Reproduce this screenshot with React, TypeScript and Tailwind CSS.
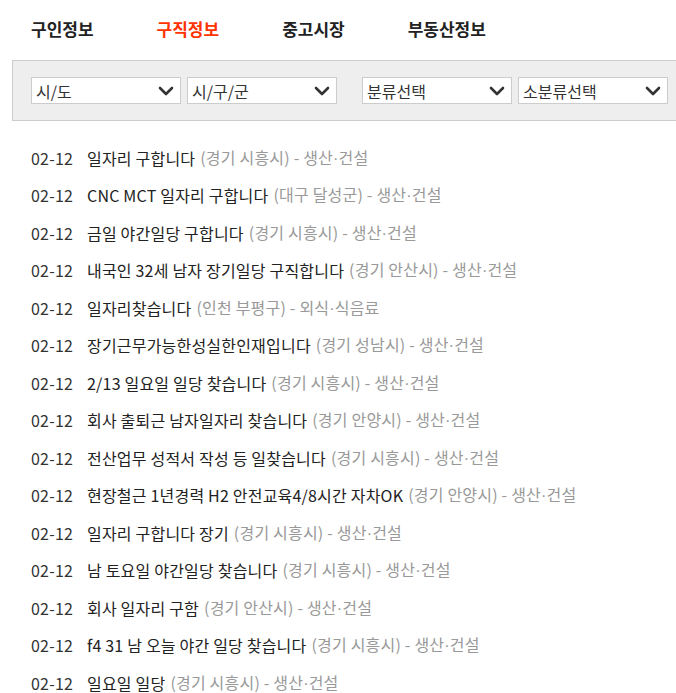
const tabs = [
  { label: '구인정보', active: false },
  { label: '구직정보', active: true },
  { label: '중고시장', active: false },
  { label: '부동산정보', active: false },
];

const posts = [
  { title: '일자리 구합니다', area: '경기 시흥시', cat: '생산·건설' },
  { title: 'CNC MCT 일자리 구합니다', area: '대구 달성군', cat: '생산·건설' },
  { title: '금일 야간일당 구합니다', area: '경기 시흥시', cat: '생산·건설' },
  { title: '내국인 32세 남자 장기일당 구직합니다', area: '경기 안산시', cat: '생산·건설' },
  { title: '일자리찾습니다', area: '인천 부평구', cat: '외식·식음료' },
  { title: '장기근무가능한성실한인재입니다', area: '경기 성남시', cat: '생산·건설' },
  { title: '2/13 일요일 일당 찾습니다', area: '경기 시흥시', cat: '생산·건설' },
  { title: '회사 출퇴근 남자일자리 찾습니다', area: '경기 안양시', cat: '생산·건설' },
  { title: '전산업무 성적서 작성 등 일찾습니다', area: '경기 시흥시', cat: '생산·건설' },
  { title: '현장철근 1년경력 H2 안전교육4/8시간 자차OK', area: '경기 안양시', cat: '생산·건설' },
  { title: '일자리 구합니다 장기', area: '경기 시흥시', cat: '생산·건설' },
  { title: '남 토요일 야간일당 찾습니다', area: '경기 시흥시', cat: '생산·건설' },
  { title: '회사 일자리 구함', area: '경기 안산시', cat: '생산·건설' },
  { title: 'f4 31 남 오늘 야간 일당 찾습니다', area: '경기 시흥시', cat: '생산·건설' },
  { title: '일요일 일당', area: '경기 시흥시', cat: '생산·건설' },
];

function Chevron() {
  return (
    <svg width="16" height="10" viewBox="0 0 16 10" className="shrink-0">
      <path d="M2 2 L8 8 L14 2" fill="none" stroke="#333" strokeWidth="2.6" strokeLinecap="round" strokeLinejoin="round" />
    </svg>
  );
}

function SelectBox({ label }: { label: string }) {
  return (
    <div className="w-[150px] h-[27px] bg-white border border-[#cccccc] flex items-center justify-between pl-[4px] pr-[6px] text-[16px] leading-none text-[#333]">
      <span>{label}</span>
      <Chevron />
    </div>
  );
}

// category with a narrow middle dot, like the original bitmap font
function Category({ text }: { text: string }) {
  const [a, b] = text.split('·');
  return (
    <>
      {a}
      <span className="font-['Liberation_Sans',sans-serif]">·</span>
      {b}
    </>
  );
}

export default function App() {
  return (
    <div className="w-[676px] overflow-x-hidden bg-white font-['Noto_Sans_CJK_KR',sans-serif]">
      {/* Tabs */}
      <div className="flex gap-[63px] pl-[31px] h-[60px] pb-[4px] items-center">
        {tabs.map((t) => (
          <span
            key={t.label}
            className={`text-[17px] font-bold leading-none ${t.active ? 'text-[#ff3300]' : 'text-[#222]'}`}
          >
            {t.label}
          </span>
        ))}
      </div>

      {/* Filters */}
      <div className="ml-[12px] w-[700px] h-[61px] bg-[#eeeeee] border border-[#cccccc] flex items-center pl-[18px]">
        <div className="flex gap-[6px]">
          <SelectBox label="시/도" />
          <SelectBox label="시/구/군" />
        </div>
        <div className="flex gap-[6px] ml-[25px]">
          <SelectBox label="분류선택" />
          <SelectBox label="소분류선택" />
        </div>
      </div>

      {/* List */}
      <ul className="pt-[18px]">
        {posts.map((p, i) => (
          <li key={i} className="h-[37.5px] flex items-center pl-[31px] text-[16px] leading-[18px] tracking-[0.2px] whitespace-nowrap">
            <span className="w-[56px] text-[#333]">02-12</span>
            <span className="text-[#222]">{p.title}</span>
            <span className="text-[#999] ml-[5px]">
              ({p.area}) - <Category text={p.cat} />
            </span>
          </li>
        ))}
      </ul>
    </div>
  );
}
